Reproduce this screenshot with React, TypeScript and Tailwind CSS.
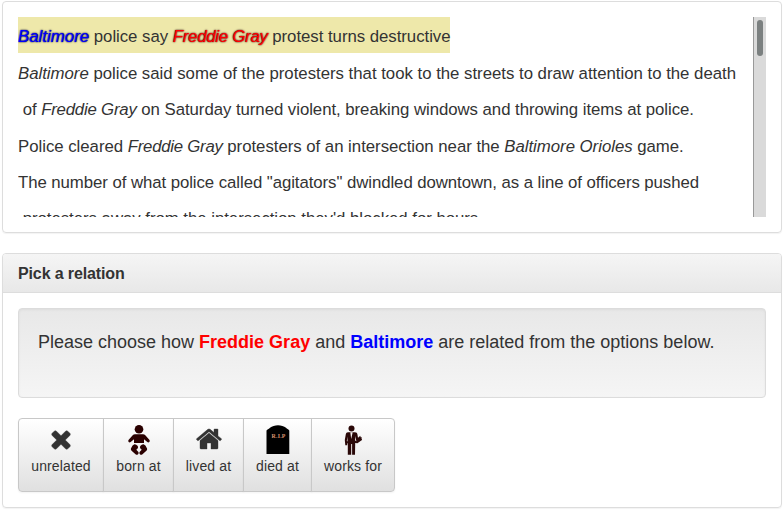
import type { ReactNode } from "react";

function TimesIcon() {
  return (
    <svg viewBox="0 0 1792 1792" className="h-7 w-7 fill-[#333] stroke-[#333] stroke-[30]">
      <path d="M1490 1322q0 40-28 68l-136 136q-28 28-68 28t-68-28l-294-294-294 294q-28 28-68 28t-68-28l-136-136q-28-28-28-68t28-68l294-294-294-294q-28-28-28-68t28-68l136-136q28-28 68-28t68 28l294 294 294-294q28-28 68-28t68 28l136 136q28 28 28 68t-28 68l-294 294 294 294q28 28 28 68z" />
    </svg>
  );
}

function HomeIcon() {
  return (
    <svg viewBox="0 0 1792 1792" className="h-7 w-7 fill-[#333] stroke-[#333] stroke-[24]">
      <path d="M1472 992v480q0 26-19 45t-45 19h-384v-384h-256v384h-384q-26 0-45-19t-19-45v-480q0-1 .5-3t.5-3l575-474 575 474q1 2 1 6zm223-69l-62 74q-8 9-21 11h-3q-13 0-21-7l-692-577-692 577q-12 8-24 7-13-2-21-11l-62-74q-8-10-7-23.5t11-21.5l719-599q32-26 76-26t76 26l244 204v-195q0-14 9-23t23-9h192q14 0 23 9t9 23v408l219 182q10 8 11 21.5t-7 23.5z" />
    </svg>
  );
}

function BabyIcon() {
  return (
    <svg viewBox="0 0 22 30" className="h-[30px] w-[22px] fill-[#2a0000]">
      <circle cx="11" cy="4.3" r="4.3" />
      <path d="M7 9.300h8c1 0 1.700.3 2.300.9l4 4.600c1.200 1.600-.4 3.400-2 2.300L16 14.200V18H6v-3.800l-3.300 2.900c-1.600 1.100-3.200-.7-2-2.300l4-4.600C5.300 9.600 6 9.300 7 9.300z" />
      <path d="M6.500 19.200q1.500-.2 3.300 1.800l.2 2-1.700 1.800 2.100 2.200c.8 1.800-1 3.500-2.600 2.500l-4.200-3.800c-.9-.9-.9-1.700-.4-2.700.8-1.500 1.300-3.200 3.300-3.800z" />
      <path d="M15.500 19.200q-1.500-.2-3.300 1.800l-.2 2 1.700 1.800-2.100 2.200c-.8 1.800 1 3.500 2.600 2.500l4.200-3.800c.9-.9.9-1.700.4-2.700-.8-1.500-1.300-3.200-3.300-3.800z" />
    </svg>
  );
}

function TombIcon() {
  return (
    <svg viewBox="0 0 24 29" className="h-[29px] w-6">
      <path d="M.5 29V5.500C2 4 3 3.800 4 2.800 8-.7 16-.7 20 2.800c1 1 2 1.200 3.300 2.700V29z" fill="#000" />
      <text x="12.500" y="13" textAnchor="middle" fontSize="5.800" fontWeight="bold" fill="#d9946f" fontFamily="Liberation Serif, serif" textLength="14">
        R.I.P
      </text>
    </svg>
  );
}

function WorkerIcon() {
  return (
    <svg viewBox="0 0 18 30" className="h-[30px] w-[18px] fill-[#2a0808]">
      <circle cx="7.500" cy="3.400" r="3" />
      <path d="M4 7.300h7c1.500 0 2.200.8 2.400 2l.6 3.500 2.300-2 .3 1.500 1.400.2-.6 1.500 1 .6-5 3.600-2.200-.2-.2 11.700H8.100V19h-.9v10.700H3.800V18.500l-.4-.8-.3 2.600H1.300L.8 15l1-5.700c.3-1.300.9-2 2.200-2z" />
      <path d="M6.300 7.300l.9 6.700 1.500-6.700zM3.500 11.500l-.7 4.500.7.500zM11.100 11v4.500l1.300.8z" fill="#f7f2f2" />
    </svg>
  );
}

function RelationButton({ icon, label, className }: { icon: ReactNode; label: string; className: string }) {
  return (
    <button
      className={`flex h-[74px] flex-col items-center border border-[#c8c8c8] bg-linear-to-b from-white to-[#e0e0e0] text-[14px] leading-5 tracking-[0.12px] text-[#333] shadow-[0_1px_2px_rgba(0,0,0,0.05)] ${className}`}
    >
      <span className="flex h-[37px] items-start pt-1.5">{icon}</span>
      <span>{label}</span>
    </button>
  );
}

export default function App() {
  return (
    <div className="h-[511px] overflow-hidden bg-white px-[2px] pt-px font-['Liberation_Sans',Arial,sans-serif] text-[#333]">
      <section className="flex h-[232px] rounded-[4px] border border-[#ddd] p-[15px] shadow-[0_1px_1px_rgba(0,0,0,0.05)]">
        <div className="h-[200px] flex-1 overflow-hidden text-[16.800px] leading-[36.500px] whitespace-pre">
          <div className="h-[38.500px]">
            <div className="h-9 w-[432px] bg-[#eee8aa] leading-10 tracking-[-0.035px]">
              <em className="tracking-[0.03px] text-[blue] [text-shadow:0_0_2px_#222,0_0_1px_#0000b0]">Baltimore</em> police say{" "}
              <em className="tracking-[-0.25px] text-[red] [text-shadow:0_0_2px_#222,0_0_1px_#b00000]">Freddie Gray</em> protest turns destructive
            </div>
          </div>
          <div className="tracking-[-0.012px]">
            <em>Baltimore</em> police said some of the protesters that took to the streets to draw attention to the death
          </div>
          <div className="tracking-[-0.045px]">
            {" "}of <em className="tracking-[-0.2px]">Freddie Gray</em> on Saturday turned violent, breaking windows and throwing items at police.
          </div>
          <div className="tracking-[-0.025px]">
            Police cleared <em className="tracking-[-0.25px]">Freddie Gray</em> protesters of an intersection near the <em>Baltimore Orioles</em> game.
          </div>
          <div className="tracking-[-0.065px]">
            The number of what police called "agitators" dwindled downtown, as a line of officers pushed
          </div>
          <div className="-mt-px tracking-[-0.03px]">{" "}protesters away from the intersection they'd blocked for hours.</div>
        </div>
        <div className="flex h-[200px] w-[13px] justify-center border-l border-[#999] bg-[#dadada] pt-[3px]">
          <div className="h-9 w-1.5 rounded-[3px] bg-[#7b8080]" />
        </div>
      </section>

      <section className="mt-5 h-[255px] rounded-[4px] border border-[#ddd] shadow-[0_1px_1px_rgba(0,0,0,0.05)]">
        <header className="h-[39px] rounded-t-[3px] border-b border-[#ddd] bg-linear-to-b from-[#f5f5f5] to-[#e8e8e8] px-[15px] text-[16px] leading-10 font-bold tracking-[-0.13px]">
          Pick a relation
        </header>
        <div className="p-[15px]">
          <div className="h-[90px] rounded-[4px] border border-[#dcdcdc] bg-linear-to-b from-[#e8e8e8] to-[#f5f5f5] px-[19px] pt-5 text-[18px] leading-[26px] whitespace-nowrap shadow-[inset_0_1px_3px_rgba(0,0,0,0.05)]">
            Please choose how <b className="text-[red]">Freddie Gray</b> and <b className="text-[blue]">Baltimore</b> are related from the options below.
          </div>
          <div className="mt-5 flex">
            <RelationButton icon={<TimesIcon />} label="unrelated" className="w-[86px] rounded-l-[4px]" />
            <RelationButton icon={<BabyIcon />} label="born at" className="-ml-px w-[71px]" />
            <RelationButton icon={<HomeIcon />} label="lived at" className="-ml-px w-[71px]" />
            <RelationButton icon={<TombIcon />} label="died at" className="-ml-px w-[69px]" />
            <RelationButton icon={<WorkerIcon />} label="works for" className="-ml-px w-[84px] rounded-r-[4px]" />
          </div>
        </div>
      </section>
    </div>
  );
}
